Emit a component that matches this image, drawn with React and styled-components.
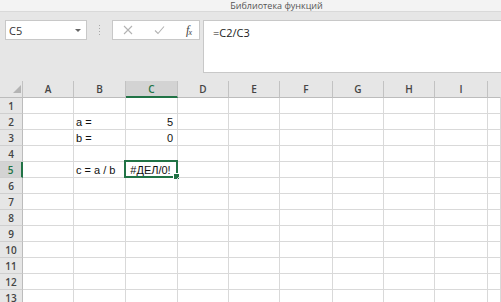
import React from 'react';
import styled, { createGlobalStyle } from 'styled-components';

const GlobalStyle = createGlobalStyle`
    html, body {
        margin: 0;
        padding: 0;
        background: #ffffff;
        overflow: hidden;
    }
    body {
        font-family: "Liberation Sans", Arial, sans-serif;
    }
`;

const Window = styled.div`
    width: 501px;
    height: 302px;
    overflow: hidden;
    display: flex;
    flex-direction: column;
    background: #ffffff;
`;

const TitleStrip = styled.div`
    height: 11px;
    flex: none;
    background: #f3f3f3;
    border-bottom: 1px solid #d9d9d9;
    display: flex;
    justify-content: center;
    align-items: center;
    padding-left: 52px;
    font-family: "Open Sans", "Noto Sans", sans-serif;
    font-size: 9px;
    color: #555555;
    line-height: 11px;
`;

const Toolbar = styled.div`
    flex: none;
    height: 69px;
    background: #e6e6e6;
    display: flex;
    align-items: flex-start;
    padding: 8px 0 0 5px;
    box-sizing: border-box;
`;

const NameBox = styled.div`
    width: 82px;
    height: 20px;
    box-sizing: border-box;
    background: #ffffff;
    border: 1px solid #c8c8c8;
    display: flex;
    align-items: center;
    justify-content: space-between;
    padding: 0 5px 0 3px;
    font-family: "Open Sans", "Noto Sans", sans-serif;
    font-size: 11px;
    color: #333333;
`;

const DropArrow = styled.span`
    width: 0;
    height: 0;
    border-left: 3px solid transparent;
    border-right: 3px solid transparent;
    border-top: 3px solid #666666;
`;

const Grip = styled.div`
    width: 25px;
    height: 20px;
    display: flex;
    flex-direction: column;
    align-items: center;
    justify-content: center;
    gap: 2px;
`;

const Dot = styled.span`
    width: 1px;
    height: 1px;
    background: #a8a8a8;
`;

const FxButtons = styled.div`
    width: 88px;
    height: 20px;
    box-sizing: border-box;
    background: #ffffff;
    border: 1px solid #c8c8c8;
    display: flex;
    align-items: center;
    justify-content: space-between;
    padding: 0 8px 0 10px;
`;

const FxLabel = styled.span`
    font-family: "Liberation Serif", "DejaVu Serif", serif;
    font-style: italic;
    font-size: 12px;
    color: #444444;
    letter-spacing: -1px;
    sub {
        font-size: 8px;
        vertical-align: -1px;
    }
`;

const FormulaInput = styled.div`
    margin-left: 3px;
    flex: 1;
    height: 53px;
    box-sizing: border-box;
    background: #ffffff;
    border: 1px solid #c8c8c8;
    border-right: none;
    padding: 4px 0 0 9px;
    font-family: "Open Sans", "Noto Sans", sans-serif;
    font-size: 11px;
    color: #222222;
`;

const Sheet = styled.div`
    flex: 1;
    display: grid;
    grid-template-columns: 23px 51px 52px 52px 51px 51px 53px 51px 51px 53px 1fr;
    grid-auto-rows: 16px;
    grid-template-rows: 17px;
    background: #ffffff;
`;

const ColHead = styled.div`
    box-sizing: border-box;
    background: ${(p) => (p.active ? '#d3d3d3' : '#e6e6e6')};
    border-right: 1px solid ${(p) => (p.last ? 'transparent' : '#c2c2c2')};
    border-bottom: ${(p) => (p.active ? '2px solid #217346' : '1px solid #bcbcbc')};
    display: flex;
    align-items: center;
    justify-content: center;
    padding-top: ${(p) => (p.active ? '1px' : '0')};
    font-family: "Open Sans", "Noto Sans", sans-serif;
    font-size: 10px;
    font-weight: 600;
    color: ${(p) => (p.active ? '#217346' : '#444444')};
`;

const Corner = styled.div`
    box-sizing: border-box;
    background: #e6e6e6;
    border-right: 1px solid #c2c2c2;
    border-bottom: 1px solid #bcbcbc;
    display: flex;
    align-items: flex-end;
    justify-content: flex-end;
    padding: 0 1px 4px 0;
`;

const Triangle = styled.span`
    width: 0;
    height: 0;
    border-left: 8px solid transparent;
    border-bottom: 8px solid #b4b4b4;
`;

const RowHead = styled.div`
    box-sizing: border-box;
    background: ${(p) => (p.active ? '#d3d3d3' : '#e6e6e6')};
    border-right: ${(p) => (p.active ? '2px solid #217346' : '1px solid #bcbcbc')};
    border-bottom: 1px solid #cfcfcf;
    display: flex;
    align-items: center;
    justify-content: center;
    font-family: "Open Sans", "Noto Sans", sans-serif;
    font-size: 10px;
    font-weight: 600;
    color: ${(p) => (p.active ? '#217346' : '#444444')};
`;

const Cell = styled.div`
    position: relative;
    box-sizing: border-box;
    border-right: 1px solid #d9d9d9;
    border-bottom: 1px solid #d9d9d9;
    display: flex;
    align-items: center;
    justify-content: ${(p) => p.align || 'flex-start'};
    padding: 0 4px 0 2px;
    font-size: 11px;
    color: #111111;
    white-space: nowrap;
`;

const Selection = styled.div`
    position: absolute;
    left: -2px;
    top: -2px;
    right: -1px;
    bottom: -1px;
    border: 2px solid #217346;
    pointer-events: none;
`;

const FillHandle = styled.span`
    position: absolute;
    right: -4px;
    bottom: -4px;
    width: 5px;
    height: 5px;
    background: #217346;
    border: 1px solid #ffffff;
`;

const columns = ['A', 'B', 'C', 'D', 'E', 'F', 'G', 'H', 'I', ''];

const data = {
    '2B': { text: 'a =' },
    '2C': { text: '5', align: 'flex-end' },
    '3B': { text: 'b =' },
    '3C': { text: '0', align: 'flex-end' },
    '5B': { text: 'c = a / b' },
    '5C': { text: '#ДЕЛ/0!', align: 'center', selected: true },
};

function CrossIcon() {
    return (
        <svg width="10" height="10" viewBox="0 0 10 10">
            <path d="M1 1 L9 9 M9 1 L1 9" stroke="#b3b3b3" strokeWidth="1.1" fill="none" />
        </svg>
    );
}

function CheckIcon() {
    return (
        <svg width="11" height="10" viewBox="0 0 11 10">
            <path d="M1 5.5 L4 8.5 L10 1.5" stroke="#b3b3b3" strokeWidth="1.1" fill="none" />
        </svg>
    );
}

export default function App() {
    const rows = Array.from({ length: 13 }, (_, i) => i + 1);

    return (
        <Window>
            <GlobalStyle />
            <TitleStrip>Библиотека функций</TitleStrip>
            <Toolbar>
                <NameBox>
                    C5
                    <DropArrow />
                </NameBox>
                <Grip>
                    <Dot />
                    <Dot />
                    <Dot />
                    <Dot />
                </Grip>
                <FxButtons>
                    <CrossIcon />
                    <CheckIcon />
                    <FxLabel>f<sub>x</sub></FxLabel>
                </FxButtons>
                <FormulaInput>=C2/C3</FormulaInput>
            </Toolbar>
            <Sheet>
                <Corner><Triangle /></Corner>
                {columns.map((c, i) => (
                    <ColHead key={i} active={c === 'C'} last={i === columns.length - 1}>{c}</ColHead>
                ))}
                {rows.map((r) => (
                    <React.Fragment key={r}>
                        <RowHead active={r === 5}>{r}</RowHead>
                        {columns.map((c, i) => {
                            const d = data[r + c];
                            return (
                                <Cell key={i} align={d?.align}>
                                    {d?.text}
                                    {d?.selected && (
                                        <Selection>
                                            <FillHandle />
                                        </Selection>
                                    )}
                                </Cell>
                            );
                        })}
                    </React.Fragment>
                ))}
            </Sheet>
        </Window>
    );
}
